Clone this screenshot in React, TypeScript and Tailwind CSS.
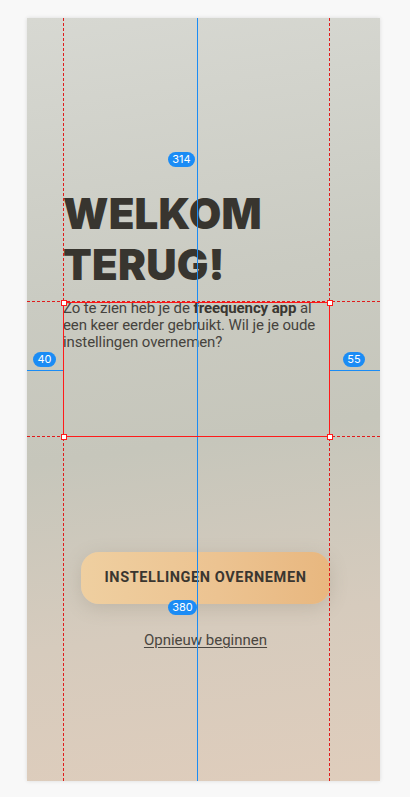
import React from "react";

function Pill({ label, className }: { label: string; className: string }) {
    return (
        <div
            className={`absolute h-[15px] px-[5px] rounded-full bg-[#1b8cf5] text-white text-[11px] leading-[15px] flex items-center justify-center ${className}`}
            style={{ fontFamily: "Inter, 'Liberation Sans', sans-serif" }}
        >
            {label}
        </div>
    );
}

function Handle({ className }: { className: string }) {
    return <div className={`absolute w-[6px] h-[6px] bg-white border border-[#ff1a1a] ${className}`} />;
}

export default function App() {
    return (
        <div className="w-[410px] h-[797px] bg-[#f8f8f8] pt-[18px] pl-[27px] overflow-hidden">
            <div className="relative w-[353px] h-[763px] shadow-[0_0_4px_rgba(0,0,0,0.12)] bg-[linear-gradient(172deg,#d7d8d2_0%,#cacbc2_35%,#c6c6bb_55%,#d6cbbd_78%,#dfcdbc_100%)]">
                {/* page content */}
                <div className="flex flex-col h-full pl-[36px] pr-[51px] pt-[170px]">
                    <h1
                        className="text-[42px] leading-[51px] font-black text-[#38352f] tracking-[0.2px]"
                        style={{ fontFamily: "Inter, 'Liberation Sans', sans-serif" }}
                    >
                        WELKOM
                        <br />
                        TERUG!
                    </h1>
                    <p
                        className="mt-[10px] h-[133px] text-[15px] leading-[17px] tracking-[-0.1px] text-[#46433d]"
                        style={{ fontFamily: "Roboto, 'Liberation Sans', sans-serif" }}
                    >
                        Zo te zien heb je de <span className="font-bold text-[#3a3731]">freequency app</span> al een keer eerder gebruikt. Wil je je oude instellingen overnemen?
                    </p>

                    <div
                        className="mt-[119px] ml-[18px] -mr-[1px] flex flex-col items-center gap-[25px]"
                        style={{ fontFamily: "Roboto, 'Liberation Sans', sans-serif" }}
                    >
                        <button className="w-full h-[52px] rounded-[18px] bg-[linear-gradient(90deg,#efcfa0_0%,#ecc391_55%,#e8b77f_100%)] shadow-[0_4px_18px_rgba(120,110,90,0.22)] text-[14.5px] font-bold tracking-[0.6px] text-[#3a3630]">
                            INSTELLINGEN OVERNEMEN
                        </button>
                        <a className="text-[15px] text-[#4a4640] underline underline-offset-2 decoration-1">Opnieuw beginnen</a>
                    </div>
                </div>

                {/* measurement overlay */}
                <div className="absolute top-0 bottom-0 left-[36px] border-l border-dashed border-[#e01b1b]" />
                <div className="absolute top-0 bottom-0 left-[302px] border-l border-dashed border-[#e01b1b]" />
                <div className="absolute left-0 right-0 top-[283px] border-t border-dashed border-[#e01b1b]" />
                <div className="absolute left-0 right-0 top-[418px] border-t border-dashed border-[#e01b1b]" />
                <div className="absolute top-0 bottom-0 left-[170px] w-px bg-[#1b8cf5]" />
                <div className="absolute left-[36px] top-[284px] w-[267px] h-[135px] border border-[#ff1a1a]" />
                <div className="absolute left-0 top-[352px] w-[36px] h-px bg-[#1b8cf5]" />
                <div className="absolute left-[303px] top-[352px] right-0 h-px bg-[#1b8cf5]" />
                <Handle className="left-[34px] top-[282px]" />
                <Handle className="left-[300px] top-[282px]" />
                <Handle className="left-[34px] top-[416px]" />
                <Handle className="left-[300px] top-[416px]" />
                <Pill label="314" className="left-[141px] top-[134px] w-[27px]" />
                <Pill label="40" className="left-[6px] top-[334px] w-[23px]" />
                <Pill label="55" className="left-[316px] top-[334px] w-[22px]" />
                <Pill label="380" className="left-[141px] top-[582px] w-[29px]" />
            </div>
        </div>
    );
}
